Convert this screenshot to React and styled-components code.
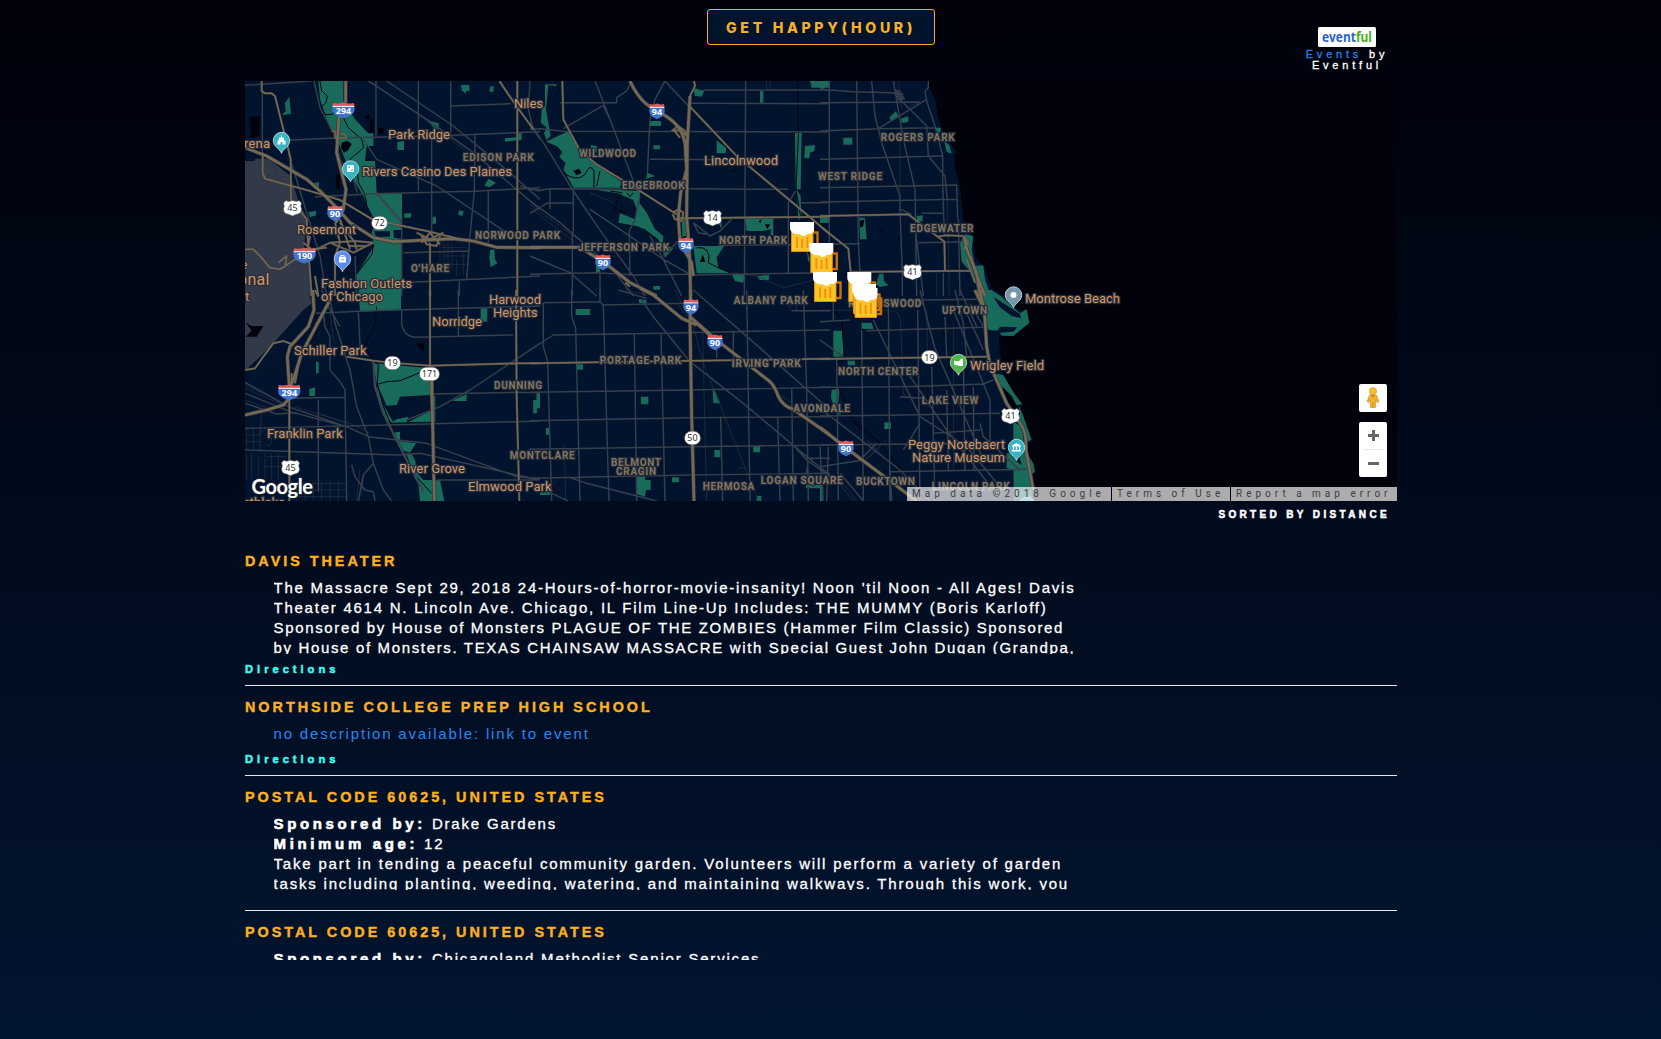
import React from 'react';
import styled, { createGlobalStyle } from 'styled-components';

const GlobalStyle = createGlobalStyle`
  * { box-sizing: border-box; }
  html, body { margin: 0; height: 100%; }
  body {
    font-family: "Liberation Sans", Helvetica, Arial, sans-serif;
    color: #fff;
    background: linear-gradient(#00010a, #021530) no-repeat;
    background-size: 100% 1039px;
    overflow: hidden;
  }
`;

const Page = styled.div`
  width: 1661px;
  height: 1039px;
  padding-right: 19px;
  display: flex;
  flex-direction: column;
  align-items: center;
`;

const Header = styled.header`
  width: 1152px;
  height: 81px;
  display: grid;
  grid-template-columns: 100px 1fr 100px;
  align-items: start;
`;

const HappyButton = styled.button`
  grid-column: 2;
  justify-self: center;
  margin-top: 9px;
  width: 228px;
  height: 36px;
  padding: 1px 0 0;
  border: 1px solid #fdb01f;
  border-radius: 3px;
  background: #02132d;
  color: #fdb01f;
  font: 800 14.2px/34px Inter, sans-serif;
  letter-spacing: 3.65px;
  white-space: nowrap;
`;

const Credit = styled.div`
  margin-top: 27px;
  display: flex;
  flex-direction: column;
  align-items: center;
  font-size: 11px;
  line-height: 11px;
  letter-spacing: 3.8px;
  text-align: center;
  -webkit-text-stroke: 0.3px;
`;

const CreditText = styled.div`
  padding-top: 2px;
  white-space: nowrap;
`;

const CreditLink = styled.a`
  color: #1f83ee;
`;

const MapFrame = styled.section`
  position: relative;
  width: 1152px;
  height: 420px;
  flex: none;
  overflow: hidden;
  background: #02132d;
`;

const MapDrawing = styled.svg`
  display: block;
`;

const Town = styled.text`
  font: 400 ${p => p.$size || 13}px Roboto, sans-serif;
  fill: #d39563;
  stroke: #242f3e;
  stroke-width: 2.6px;
  stroke-linejoin: round;
  paint-order: stroke;
`;

const Hood = styled.text`
  font: 700 10px Roboto, sans-serif;
  fill: #827460;
  stroke: #1f2938;
  stroke-width: 2.4px;
  stroke-linejoin: round;
  paint-order: stroke;
`;

const ShieldText = styled.text`
  font: ${p => (p.$bold ? 700 : 400)} 9px "Noto Sans", sans-serif;
  fill: ${p => (p.$bold ? '#fff' : '#333')};
  text-anchor: middle;
`;

const GoogleText = styled.text`
  font: 700 20px Lato, sans-serif;
  fill: #fff;
  stroke: #26303f;
  stroke-width: 1.4px;
  paint-order: stroke;
`;

const MapControls = styled.div`
  position: absolute;
  right: 10px;
  bottom: 24px;
  display: flex;
  flex-direction: column;
  gap: 10px;
`;

const ControlBox = styled.div`
  width: 28px;
  height: ${p => p.$height}px;
  border-radius: 2px;
  background: #fff;
  display: flex;
  flex-direction: column;
  align-items: center;
  justify-content: center;
`;

const ZoomButton = styled.button`
  width: 28px;
  height: 27px;
  padding: 0;
  border: 0;
  background: none;
  display: flex;
  align-items: center;
  justify-content: center;
`;

const ZoomRule = styled.div`
  width: 19px;
  height: 1px;
  background: #e6e6e6;
`;

const Attribution = styled.div`
  position: absolute;
  right: 0;
  bottom: 0;
  height: 14px;
  display: flex;
  gap: 1px;
`;

const AttributionItem = styled.span`
  width: ${p => p.$width}px;
  padding-left: 5px;
  background: rgba(245, 245, 245, 0.7);
  color: #3c3c3c;
  font: 400 10px/14px Roboto, sans-serif;
  letter-spacing: 4px;
  white-space: nowrap;
`;

const SortNote = styled.div`
  width: 1152px;
  height: 39px;
  padding: 7px 7px 0 0;
  font-size: 10px;
  font-weight: 700;
  line-height: 13px;
  letter-spacing: 3.35px;
  text-align: right;
  -webkit-text-stroke: 0.5px;
`;

const List = styled.main`
  width: 1152px;
  height: 420px;
  overflow: hidden;
`;

const Item = styled.article`
  padding: 11px 0 ${p => (p.$bare ? 20 : 8)}px;
  border-bottom: 1px solid #e8e8e8;
`;

const Title = styled.h2`
  margin: 0 0 7px;
  color: #fdb01f;
  font-size: 14.4px;
  font-weight: 700;
  line-height: 20px;
  letter-spacing: 2.97px;
  -webkit-text-stroke: 0.4px;
`;

const Description = styled.div`
  margin-left: 28.5px;
  max-height: 76px;
  overflow: hidden;
  font-size: 15px;
  line-height: 20px;
  letter-spacing: 1.8px;
`;

const Line = styled.div`
  height: 20px;
  letter-spacing: ${p => p.$spacing || 1.8}px;
  white-space: nowrap;
  -webkit-text-stroke: 0.3px;
`;

const Strong = styled.strong`
  letter-spacing: 3.65px;
  -webkit-text-stroke: 0.6px;
`;

const EventLink = styled.a`
  color: #2389f2;
  -webkit-text-stroke: 0;
`;

const Directions = styled.a`
  display: block;
  margin-top: 7px;
  color: #3cfdf0;
  font-size: 11.2px;
  font-weight: 700;
  line-height: 16px;
  letter-spacing: 3.97px;
  -webkit-text-stroke: 0.5px;
`;

/* Each tile is drawn in its own units, three to a screen pixel. */
const tiles = [
  {
    x: 240, y: 76,
    airport: 'M15 255H45V248H85L152 300 175 375 200 425 192 520 205 560 215 660H15Z',
    parks: 'M235 15H310V75L345 130 385 172H400V210H380L375 255H405L410 352H486V660H365L347 600 402 510 395 470 408 437 388 402 370 360 340 310 315 250 287 180 270 158 240 70ZM663 27H688V45H678V53L665 43ZM750 32 761 30V47H748ZM135 82 148 62 153 113 125 118 137 105ZM560 132 596 142 597 162 582 156ZM472 198 492 195V222H472ZM795 187 832 183V170H845V192L795 197ZM745 308 768 320 750 333 733 330ZM493 412H513V425H493ZM578 422H588V443H576ZM657 403 671 406 667 420 655 417ZM750 523 763 520 765 550 772 562 752 574 748 545ZM205 408 228 405V418L210 424ZM218 322 237 318V340L225 332Z',
    land: 'M402 466H450V482H408ZM460 462H484V488L462 485Z',
    water: 'M30 123 60 121 58 180 32 187ZM305 200 322 194 335 204 325 222 312 230 303 215ZM375 120 388 115V130H375ZM390 130H400V170H387ZM415 155H430V174H415ZM288 296 300 292V340H288Z',
    river: 'M240 15 245 45 262 60 258 80 243 95 256 116 275 115 290 105M310 125 325 155 365 190 371 215 330 250 352 280 355 320 372 350 380 380 370 400M400 505 396 535 345 600',
    minor: 'M15 28 215 15M67 50V250M140 193 285 186 440 183 640 178 900 167M222 15 240 95 285 180 300 250 340 310 352 350M408 15V180M385 15 560 130 700 230 900 400M440 15 640 150 780 265 900 370M535 15V345M632 15V170M632 90 812 83M575 190V490M705 175 703 345 690 480 680 610M745 345V500M225 362 400 353 700 346 900 335M490 530 685 525M480 620 900 600M370 190 410 250 590 330 740 430 830 490M485 430V660M870 15 865 100 880 160 900 190M840 330 900 345M658 610V660M145 230 200 410 240 540 260 660M345 540 350 660',
    thick: 'M408 350 485 437',
    fine: 'M390 15 575 145 690 235M600 500V560M612 500V570M624 500V575M636 505V580M605 515H680M610 540H685M610 565H680M650 550V600M670 530V600M80 275H108V300H80',
    major: 'M65 15V45L75 52H95L105 60 140 200 152 250 153 370 200 430 205 520 215 660M68 230V290L75 308 210 345 300 372 400 432 450 442 560 465 650 487M832 15V660M778 15 822 80 880 160M570 500V660M15 520H40L60 540 90 575 120 580 165 550 230 520 270 500 345 495 400 500M285 440 300 500 285 540V660M270 500 340 530 400 500M300 440 345 500 350 520M545 480 560 505 590 510 600 480M530 470 570 490 610 470M545 500 570 470 600 505M190 500 215 520 260 515M115 560 140 540 135 575M300 430 330 520M210 480 195 560M325 510H380M225 600 235 660M275 165H285V185H320L315 175 300 172',
    wide: 'M317 15V80M297 120 290 230 318 340 310 400 287 440M15 215 80 240 200 310 240 345 285 390 330 440 400 485 460 497 640 488 700 495 770 514 900 515',
  },
  {
    x: 240, y: 290,
    airport: 'M15 0H205L215 40 190 60 100 160 60 200 15 242Z',
    parks: 'M355 0H483V60L360 65ZM400 220 540 232 570 235V315L480 320 470 345 440 347 410 280ZM455 398 470 388 505 380 500 397ZM505 396 540 378 580 360 587 395ZM410 285 430 345 462 400 440 390 415 320ZM635 333 680 312V333ZM722 55H742V95H722ZM580 318H586V393H580ZM455 428 480 425V450H465ZM475 453 528 460 510 488 490 482ZM498 490 515 492 527 515 528 545 550 570H600L613 633H540L535 580ZM228 215H236V250H228ZM208 297 225 292V318H208ZM880 330H890V310H900V355H890V370H880Z',
    land: '',
    water: 'M18 98 35 108H70L50 140H18L35 122ZM528 160H552V185L540 175ZM450 360 458 380 448 370Z',
    river: 'M410 50 405 100 375 165 388 195 415 225 412 280 430 350 460 420 470 450 520 550 575 610M412 283 440 275 480 272 540 248',
    minor: 'M228 70 390 62 830 50 900 48M250 70 255 110 270 140V240L300 275 315 300 320 633M355 65 360 165 385 200M485 60V100Q490 140 530 142L820 135M655 0V140M900 160 780 240 690 300 600 350 500 390M580 312 830 307 900 308M140 325 315 322M15 415 450 405 830 395 900 393M270 30 285 100 330 240 350 350 385 440 400 520 430 600 455 633M15 277 150 352 320 410 385 440 560 460 830 560 900 566M15 310 150 365 300 405M15 340 110 372 170 368M15 480 310 490 470 495 540 490 900 570M235 330V605M590 570H900M400 520 370 555 355 633M335 525 345 560 375 600 400 605 405 633M245 0 260 40 300 110',
    thick: 'M400 215 405 290 430 370 470 450 510 530 550 605',
    fine: 'M15 285 140 345M15 295 130 345M15 330 100 360M160 350 330 400 390 430M235 370 320 400M65 370 60 430Q90 400 95 450 90 480 75 460M20 415V480M40 415V480M60 415V480M15 435H65M15 455H65M20 490V570M35 490V570M55 500V580M75 490V570M95 490V570M115 490V570M80 500H140M70 530H140M150 580H320M160 600H320M165 620H320M170 575V633M195 575V633M220 575V633M245 575V633M270 575V633M295 575V633M270 60 280 150 290 160M360 540 350 633M370 560 365 620',
    major: 'M148 320V633M15 240 45 235 70 200 100 160 130 153 155 162M320 200 400 212 450 218 570 227 830 220H900M570 0V230L578 420 583 633M828 0 830 320 838 633M155 250V300M180 200 165 280M225 0 235 20',
    wide: 'M218 0 222 60 205 110 150 170 142 200 148 290M270 30 185 190 160 270 150 290M148 325 130 345 80 360 15 375M575 230 578 400 583 633',
  },
  {
    x: 530, y: 76,
    parks: 'M45 25H82L78 30 55 28 48 100 55 140 62 180 50 192 42 172 50 155 33 140 35 100 45 90ZM48 197 115 165 130 180 150 215 165 242 275 318 270 335H130L100 280 107 262 88 242 97 228 80 210ZM180 338 330 345 328 380 350 410 375 460 400 480 398 500 430 518 405 545 385 490 345 460 320 450 265 440 270 412 315 430 320 400 310 372 262 352ZM455 430H468V480H457ZM490 510H582L560 545 565 575 600 592H500ZM645 428H730V478H722V460L700 465 650 465ZM605 595 645 597 640 620 615 615ZM680 600 718 597 716 612H690ZM370 630H390V641H370ZM198 560H210V590H198ZM183 207 200 210V230L183 215ZM370 208H390V220H370ZM360 135H393V150H360ZM352 290 375 300 348 308ZM560 193 588 215V232H560ZM690 45H700V80H690ZM490 35 523 45 515 62 495 60ZM840 15H900V35H845ZM795 170H815L812 340H797ZM825 210 855 207 853 225 840 230 838 247H823ZM800 340 812 360 815 430H805ZM870 425H900V440H870ZM830 520 840 550 835 560ZM565 425H575V460L565 440Z',
    land: '',
    water: 'M130 285 147 278 155 290 140 298ZM518 535 526 558H510ZM608 282 620 278 615 290ZM685 436 695 430 692 440ZM705 445 720 445 712 460Z',
    river: 'M100 290Q140 320 165 295 180 260 192 285V335M210 285 200 330M240 345 275 350 260 375 255 400 290 410M500 515Q545 510 535 560 560 575 600 590M80 20 90 45M803 15 805 180 798 340 815 440M290 350 300 362 310 350',
    minor: 'M647 15 643 660M405 15 375 70 360 130 352 290M195 15 240 130 312 320M0 140 40 200 130 345 215 470 310 600 345 660M405 15 480 95M90 80H260V65L290 45 303 20M100 158 220 88M0 160 30 158 100 166 900 168M480 82 900 83M360 250 700 252M480 338 775 340M0 340 30 343 60 338 480 340M130 340V470M0 412 50 382 128 380M0 595 200 590 320 597 490 595M520 42H900M127 470V660M210 590V660M330 360 315 430 298 465 300 600M180 400 270 460 400 550 490 600M360 480 400 550 455 660M490 440 540 480 570 465 605 430M490 440 505 470 530 475M495 597 900 590M565 508 900 505M400 540 460 480M0 375 90 440 240 570 310 660M810 380H900M775 590V380L797 345M0 540 120 590 200 660M240 130 220 88M60 400 60 340',
    thick: '',
    fine: 'M0 385 130 480 280 600M0 395 150 510M710 15V40H720V15M180 350 250 380M430 500 440 520M600 590 680 600 760 635 900 600',
    major: 'M97 15 100 130 150 225 200 265 330 345 440 415M480 92 620 240 830 415 900 475M440 427 900 422M425 165 445 150 465 165 475 185M430 160 450 185M440 150 470 180M428 410 445 400 460 410 455 435 435 430 428 415M285 620 300 632M430 165 460 160M492 15 495 30 480 60',
    wide: 'M300 15Q320 60 350 85L410 122Q455 150 465 200L470 280 452 350 445 420 450 500 485 560 490 600M480 60 472 200 470 420 478 520 482 660M0 514H150M150 514 230 565 300 620 380 660',
  },
  {
    x: 530, y: 290,
    parks: 'M137 57H180V75H137ZM327 27 349 30V42L327 38ZM141 223H159V239H141ZM333 320H355V343H333ZM548 300 555 302 569 335V340H550ZM48 414H57V434H48ZM553 480H571V502H553ZM670 468H690V487H670ZM320 560H345V570H362V600H348L345 620 320 612ZM426 562H447V577H426ZM680 618H694V633H680ZM828 585H878V595H828ZM20 310H30V345H20V370H10V335H20ZM30 608 60 606V615H30ZM832 515 835 550H828Z',
    land: '', water: '', river: '',
    minor: 'M40 38V170L53 215 65 633M125 0V80L137 115 150 633M210 0V35L220 45 230 400 237 633M313 130 320 633M393 130 405 633M560 165V205M610 125V205M650 0 660 633M572 380 578 633M743 380 750 633M785 295 790 633M820 0 830 300 835 633M870 470 878 633M40 38 210 35M215 45 480 40M0 180 70 135 400 130 600 125 900 120M0 307 480 300 900 292M0 392 480 383 900 380M0 478 480 470 900 465M0 565 480 555 900 550M265 0 350 25M335 30 370 80 480 215 640 340 830 500 900 555M490 0 640 130 810 280 900 360M120 563 170 580 300 613 380 633M60 608 115 633M785 62H900M830 505H900M785 460 830 510 900 560',
    thick: '',
    fine: 'M435 0 490 110 520 220 650 545 688 633M518 130 530 633M103 465 107 633M620 540Q635 525 650 540M440 40 470 80M780 40V60H800V40M740 310 790 340M830 500 850 510 840 520M285 0 350 15',
    major: 'M0 220 450 213 900 206',
    wide: 'M330 -5 370 15 455 85 500 105M482 0 480 100 485 380 492 633M480 80 560 150 720 275Q735 290 745 320 760 350 790 358L900 435M490 90 555 150',
  },
  {
    x: 820, y: 76,
    parks: 'M0 15H28L12 38H0ZM208 125 228 105 235 120 215 137ZM243 128 265 120V137L245 142ZM70 185H97V206H70ZM347 155H363L360 172 350 165ZM373 195 388 208 395 233 380 228ZM118 425H135L140 490H120ZM0 425H28V440H0ZM290 420 308 418V436H292ZM435 475 460 480 455 520 465 570 490 568 495 610 512 660H480L455 590 425 558 420 500ZM178 593H190L192 615 205 628 180 633 168 625Z',
    land: '',
    patch: 'M225 42 240 42 256 70 235 74Z',
    water: 'M120 435 133 430 130 450 120 455ZM178 468 192 462 180 472ZM232 488 240 484 238 496Z',
    river: '',
    minor: 'M28 15V500M110 15 115 500 120 590M155 15 165 120 185 200 240 360V400L247 590M220 15 250 190 285 340 290 660M325 15V35L315 45 320 75 345 150 368 240V320L373 480M0 40 100 47 210 50 250 55M0 80 300 78M0 165 180 158 345 155M175 158 320 70M0 250 365 240M0 335 410 327 413 430M0 378 410 370M225 55 260 90 320 150 325 240 375 300 382 370M243 400 275 415M295 500 425 497M285 455 305 620 310 660M415 430 420 660M0 505 120 503M305 412H370M120 590 122 640M247 590V660M370 590V660',
    thick: '',
    fine: 'M240 160V370M235 15 245 100M382 370 388 660M300 78 270 90M350 590V660',
    major: 'M0 420 265 415 350 480 373 497 375 583M350 482 380 478 430 480M0 450 85 518 92 588 450 584M92 590 100 600M430 480 445 500 430 520M440 550 465 620',
    wide: 'M432 480 440 520 470 590 480 660M450 540 475 610 495 660',
  },
  {
    x: 820, y: 290,
    parks: 'M460 0H515L545 20 600 70 620 58 628 98 580 138 545 137 540 128 580 125 592 112 540 110 533 122 505 120 485 60ZM520 250 550 255 582 310 607 342 590 345 570 320 545 300ZM597 350 607 370 628 430 635 450 620 455 597 400ZM580 395 605 410 615 480 640 520 645 545 630 555 640 633H582L580 540 560 535V490H600L580 450ZM40 122H68L72 200H40ZM83 212H105V226H83ZM193 397H213V417H193ZM125 98 155 98 161 118 125 116ZM35 300 58 295 55 340 62 375 50 370 33 325ZM0 590H10V633H0ZM300 30H310V48Z',
    land: 'M520 20 600 72 603 85 575 78 540 52ZM598 500 605 525 590 515Z',
    water: 'M548 290 575 318 592 350 575 360 550 330ZM583 345 600 370 592 390 580 365ZM370 120 376 135 370 132Z',
    river: 'M20 30 65 90 72 190 50 280 100 390 170 450 230 520 260 560 310 600M100 395 150 440 160 445M230 520 255 560',
    minor: 'M125 120 130 630M205 40 210 633M293 60 300 633M335 230 345 633M160 90 300 380 440 470 540 590M140 122 490 112M0 292 250 290 490 282 520 270M0 378 250 375 540 370M0 465 540 460M210 545 620 538M0 95 90 90M290 30 490 28M300 0 330 120 345 175 430 370 490 510M400 60 510 330V480M250 230 380 420 520 600M0 355 240 540 330 633M40 0V90M375 80 380 200M405 0 430 100 440 200M440 70 490 180M0 150 70 200M50 200 55 630M20 633 25 470M210 540 215 633M130 500 170 460M240 320 310 325M60 550 130 633M0 530 130 510M150 0 152 60M480 400 490 440 600 540M420 0 470 110M450 40 490 110M340 430 480 420M300 400 250 480M380 300 385 540M430 200 435 540M460 290 462 540',
    thick: '',
    fine: 'M0 60 220 62Q240 65 242 100L250 310Q255 325 300 325M55 560 110 633M45 565 100 633M130 515 180 470M400 100V540M140 450 190 500M140 505 200 450M320 60 322 180',
    major: 'M0 207 500 200',
    wide: 'M465 0 493 60 500 170 510 225 560 340 600 400Q620 420 618 480L640 600M0 412 80 475 180 550 290 633M480 0 492 60',
  },
];

const lake = 'M927 81 930 89 935 99 938 116 942 129 945 136 957 152 954 155 955 169 960 186 963 219 973 236 975 256 983 266 992 288 1004 296 1020 311 1026 309 1029 324 1013 336 1002 335 999 334 1000 352 1003 374 1010 387 1018 398 1022 404 1021 412 1029 433 1031 441 1027 445 1029 456 1034 465 1035 474 1031 478 1035 501H1397V81Z';

const towns = [
  ['Niles', 514, 29, 108.7], ['Park Ridge', 388, 62, 140], ['Rivers Casino Des Plaines', 362, 150, 176.7],
  ['Rosemont', 297, 59, 234.7], ['Fashion Outlets', 321, 91, 288.7], ['of Chicago', 321, 62, 301.7],
  ['rena', 244, 26, 148.3], ['e', 240.5, 7.5, 269.3], ['onal', 238, 31.5, 285.7, 16], ['t', 245, 4.5, 301.3],
  ['Harwood', 489, 52, 304.3], ['Heights', 493, 44.5, 317.5], ['Norridge', 432, 50, 326.5],
  ['Schiller Park', 294, 72.5, 355.5], ['Franklin Park', 267, 75.5, 438.7], ['River Grove', 399, 66, 473.7],
  ['Elmwood Park', 468, 83.5, 491.7], ['rthlake', 245, 40, 507.5], ['Lincolnwood', 704, 74, 165.7],
  ['Montrose Beach', 1025, 95, 303.5], ['Wrigley Field', 970, 74, 370.7],
  ['Peggy Notebaert', 908, 97, 450], ['Nature Museum', 912, 93, 463],
];

const hoods = [
  ['EDISON PARK', 462.7, 71, 160.3], ['NORWOOD PARK', 475, 85, 238.3], ["O'HARE", 411, 38, 271.3],
  ['DUNNING', 494, 48, 388.3], ['MONTCLARE', 509.7, 65, 458.3], ['WILDWOOD', 579, 57, 156.3],
  ['EDGEBROOK', 622, 62.5, 188.3], ['JEFFERSON PARK', 578, 91, 250.3], ['NORTH PARK', 719, 68, 243.3],
  ['ALBANY PARK', 733.7, 74, 303], ['PORTAGE PARK', 599.7, 81.5, 363.3], ['IRVING PARK', 731.7, 69, 366.3],
  ['AVONDALE', 793.3, 56.5, 411.3], ['BELMONT', 611, 50, 465.3], ['CRAGIN', 616, 40, 474.3],
  ['HERMOSA', 702.7, 51.5, 489.3], ['LOGAN SQUARE', 760.7, 82, 483.3], ['ROGERS PARK', 880.7, 74, 140.3],
  ['WEST RIDGE', 818, 64, 179.3], ['EDGEWATER', 910, 63.5, 231.3], ['RAVENSWOOD', 848.3, 73, 306.3],
  ['UPTOWN', 942, 45, 313.3], ['NORTH CENTER', 838, 80.5, 374.3], ['LAKE VIEW', 921.7, 56.5, 403.3],
  ['BUCKTOWN', 856, 58.7, 484.3], ['LINCOLN PARK', 931.7, 78, 489],
];

const interstates = [
  ['294', 343.5, 110], ['90', 335, 213], ['190', 304.5, 255.3], ['94', 657, 111], ['94', 686, 245],
  ['90', 603, 262], ['94', 691, 306.5], ['90', 715, 342], ['294', 289.3, 392], ['90', 846, 448],
];
const usRoutes = [['45', 292.5, 208], ['45', 290.5, 467.7], ['14', 712.5, 218], ['41', 912.5, 272], ['41', 1010.5, 416]];
const stateRoutes = [['72', 379.5, 223, 8], ['19', 392.5, 363, 8], ['171', 429.5, 374, 10], ['50', 692.5, 438, 8], ['19', 929.5, 357.3, 8]];

const Interstate = ({ label, x, y }) => {
  const w = label.length > 2 ? 11.5 : 8;
  return (
    <g transform={`translate(${x} ${y})`}>
      <path d={`M${-w + 1} -7Q${-w / 2} -6 0 -7.5 ${w / 2} -6 ${w - 1} -7L${w - 0.6} -4H${-w + 0.6}Z`} fill="#dc5b5b" />
      <path d={`M${-w + 0.6} -3.2H${w - 0.6}Q${w + 1.5} 5 0 8.2 ${-w - 1.5} 5 ${-w + 0.6} -3.2Z`} fill="#4273ca" />
      <path d={`M${-w + 0.6} -3.6H${w - 0.6}`} stroke="#fff" strokeWidth="1" />
      <ShieldText $bold y="4">{label}</ShieldText>
    </g>
  );
};

const UsRoute = ({ label, x, y }) => (
  <g transform={`translate(${x} ${y})`}>
    <path d="M-6.5 -7.5 -4 -6.5 0 -7.5 4 -6.5 6.5 -7.5 9 -5Q7.5 -2 9 1 9 6 4 6.3L0 8 -4 6.3Q-9 6 -9 1 -7.5 -2 -9 -5Z" fill="#fff" stroke="#555" strokeWidth=".6" />
    <ShieldText y="3.4">{label}</ShieldText>
  </g>
);

const StateRoute = ({ label, x, y, r }) => (
  <g transform={`translate(${x} ${y})`}>
    <rect x={-r} y="-6.7" width={r * 2} height="13.4" rx="6.7" fill="#fff" stroke="#555" strokeWidth=".6" />
    <ShieldText y="3.3">{label}</ShieldText>
  </g>
);

const Pin = ({ x, y, color, children }) => (
  <g transform={`translate(${x} ${y})`}>
    <path d="M0 12.8C-1 8.5-8.2 6.5-8.2 0A8.2 8.2 0 0 1 8.2 0C8.2 6.5 1 8.5 0 12.8Z" fill={color} stroke="#d3e3e8" strokeWidth=".8" />
    {children}
  </g>
);

const Beer = ({ x, y }) => (
  <g transform={`translate(${x} ${y})`}>
    <path d="M21 10.5H27.5V26H21" fill="none" stroke="#c96f0c" strokeWidth="2.4" />
    <path d="M1.5 8H23V29.5H1.5Z" fill="#fdc52c" stroke="#e88a10" strokeWidth="1" />
    <path d="M7 15V26M12.2 17V26M17.4 15V26" stroke="#f58c0c" strokeWidth="1.8" />
    <path d="M0 0H24V9Q22 13 18 11.5 14 16 9.5 12 4 13 1 9Q0 8 0 6Z" fill="#fff" />
  </g>
);

const layer = (key, props) => tiles.map(t => t[key] ? (
  <path key={`${t.x}-${t.y}`} transform={`translate(${t.x} ${t.y}) scale(.33333)`} d={t[key]} {...props} />
) : null);

const road = (color, width) => ({ fill: 'none', stroke: color, strokeWidth: width, strokeLinejoin: 'round' });

const ChicagoMap = () => (
  <MapDrawing width="1152" height="420" viewBox="245 81 1152 420">
    <path d={lake} fill="#01020b" />
    {layer('airport', { fill: '#323a49' })}
    {layer('parks', { fill: '#186a5b' })}
    {layer('land', { fill: '#02132d' })}
    {layer('patch', { fill: '#323a49' })}
    {layer('water', { fill: '#01020b' })}
    {layer('river', road('#01030d', 3))}
    {layer('fine', road('#2a3443', 2))}
    {layer('minor', road('#363f4c', 4.4))}
    {layer('thick', road('#3c4451', 7))}
    {layer('major', road('#3c3f42', 7))}
    {layer('wide', road('#33383e', 12))}
    {layer('major', road('#756955', 4.6))}
    {layer('wide', road('#756955', 8))}
    {hoods.map(([t, x, w, y]) => <Hood key={t} x={x} y={y + 0.6} textLength={w}>{t}</Hood>)}
    {towns.map(([t, x, w, y, s]) => <Town key={t} x={x} y={y - 0.7} textLength={w} $size={s}>{t}</Town>)}
    {interstates.map(([l, x, y]) => <Interstate key={`${x}`} label={l} x={x} y={y} />)}
    {usRoutes.map(([l, x, y]) => <UsRoute key={`${x}`} label={l} x={x} y={y} />)}
    {stateRoutes.map(([l, x, y, r]) => <StateRoute key={`${x}`} label={l} x={x} y={y} r={r} />)}
    <Pin x={281.5} y={140.5} color="#37b3c6">
      <path d="M-4 4V0H-2.5V-3H-.5V-5H.5V-3H2.5V0H4V4H1V1.5H-1V4Z" fill="#fff" />
    </Pin>
    <Pin x={350.5} y={169} color="#37b3c6">
      <rect x="-3.5" y="-4" width="7" height="7" rx="1" fill="#fff" />
      <path d="M-2-2.5h1.5v1.5h-1.5zM.8.2h1.5v1.5h-1.5z" fill="#37b3c6" />
    </Pin>
    <Pin x={342.5} y={259} color="#5a8ded">
      <path d="M-3.5-2H3.5V3.5H-3.5Z" fill="#fff" />
      <path d="M-1.8-1.5V-3.3H1.8V-1.5" fill="none" stroke="#fff" />
      <path d="M-1.5 0Q0 1.8 1.5 0" fill="none" stroke="#5a8ded" strokeWidth=".8" />
    </Pin>
    <Pin x={1013.5} y={295} color="#7697a9"><circle r="3" fill="#fff" /></Pin>
    <Pin x={958.5} y={362.5} color="#4db645">
      <path d="M-4.5-2-1-1 1.5-2 2-3.5 4.5-4V3.2Q0 4-4.5 2Z" fill="#fff" />
    </Pin>
    <Pin x={1016.5} y={447.5} color="#37b3c6">
      <path d="M0-4.5 4.5-2V-1H-4.5V-2ZM-4.5 2.5H4.5V4H-4.5ZM-3.7-.7h1.3v3h-1.3zM-.7-.7H.7v3H-.7zM2.4-.7h1.3v3H2.4z" fill="#fff" />
    </Pin>
    <Pin x={1027.3} y={505.5} color="#37b3c6" />
    <Beer x={790} y={222} />
    <Beer x={809.3} y={243} />
    <Beer x={813} y={272} />
    <Beer x={847.3} y={272} />
    <Beer x={852} y={284} />
    <Beer x={853.5} y={288} />
    <GoogleText x="251.5" y="494" textLength="61.5">Google</GoogleText>
  </MapDrawing>
);

const Pegman = () => (
  <svg width="14" height="22" viewBox="0 0 14 22">
    <circle cx="7" cy="4.2" r="3.6" fill="#f8bc2c" stroke="#b98b2a" strokeWidth=".5" />
    <path d="M3.5 8H10.5L13 14.5 11.3 15.5 10 12.5 9.6 20.5H4.4L4 12.5 2.7 15.5 1 14.5Z" fill="#f3b42d" stroke="#b07c30" strokeWidth=".5" />
    <path d="M4.5 8 7 11 9.5 8Z" fill="#de7c28" />
    <path d="M7 15V20.5" stroke="#c98b24" strokeWidth=".8" />
  </svg>
);

const LogoMark = () => (
  <svg width="58" height="20" viewBox="0 0 58 20">
    <rect width="58" height="20" rx="1.5" fill="#fff" />
    <text x="4" y="15.3" textLength="50" lengthAdjust="spacingAndGlyphs" fontFamily="Open Sans, sans-serif" fontWeight="700" fontSize="15" letterSpacing="0" fill="#2a63cb">
      event<tspan fill="#46b01a">ful</tspan>
    </text>
  </svg>
);

const events = [
  {
    title: 'DAVIS THEATER',
    directions: true,
    lines: [
      ["The Massacre Sept 29, 2018 24-Hours-of-horror-movie-insanity! Noon 'til Noon - All Ages! Davis", 1.76],
      ['Theater 4614 N. Lincoln Ave. Chicago, IL Film Line-Up Includes: THE MUMMY (Boris Karloff)', 1.755],
      ['Sponsored by House of Monsters PLAGUE OF THE ZOMBIES (Hammer Film Classic) Sponsored', 1.655],
      ['by House of Monsters. TEXAS CHAINSAW MASSACRE with Special Guest John Dugan (Grandpa,', 1.655],
    ],
  },
  {
    title: 'NORTHSIDE COLLEGE PREP HIGH SCHOOL',
    directions: true,
    link: 'no description available: link to event',
    lines: [],
  },
  {
    title: 'POSTAL CODE 60625, UNITED STATES',
    fields: [['Sponsored by:', 'Drake Gardens'], ['Minimum age:', '12']],
    lines: [
      ['Take part in tending a peaceful community garden. Volunteers will perform a variety of garden', 1.81],
      ['tasks including planting, weeding, watering, and maintaining walkways. Through this work, you', 1.815],
    ],
  },
  {
    title: 'POSTAL CODE 60625, UNITED STATES',
    fields: [['Sponsored by:', 'Chicagoland Methodist Senior Services']],
    lines: [],
  },
];

export default function App() {
  return (
    <>
      <GlobalStyle />
      <Page>
        <Header>
          <HappyButton>GET HAPPY(HOUR)</HappyButton>
          <Credit>
            <LogoMark />
            <CreditText>
              <CreditLink>Events</CreditLink> by<br />Eventful
            </CreditText>
          </Credit>
        </Header>
        <MapFrame>
          <ChicagoMap />
          <MapControls>
            <ControlBox $height={28}><Pegman /></ControlBox>
            <ControlBox $height={55}>
              <ZoomButton aria-label="Zoom in">
                <svg width="11" height="11"><path d="M5.5 0V11M0 5.5H11" stroke="#666" strokeWidth="3" /></svg>
              </ZoomButton>
              <ZoomRule />
              <ZoomButton aria-label="Zoom out">
                <svg width="11" height="11"><path d="M0 5.5H11" stroke="#666" strokeWidth="3" /></svg>
              </ZoomButton>
            </ControlBox>
          </MapControls>
          <Attribution>
            <AttributionItem $width={204}>Map data ©2018 Google</AttributionItem>
            <AttributionItem $width={118}>Terms of Use</AttributionItem>
            <AttributionItem $width={166}>Report a map error</AttributionItem>
          </Attribution>
        </MapFrame>
        <SortNote>SORTED BY DISTANCE</SortNote>
        <List>
          {events.map((e, i) => (
            <Item key={i} $bare={!e.directions}>
              <Title>{e.title}</Title>
              <Description>
                {e.link && <Line $spacing={1.82}><EventLink>{e.link}</EventLink></Line>}
                {(e.fields || []).map(([k, v]) => <Line key={k}><Strong>{k}</Strong> {v}</Line>)}
                {e.lines.map(([text, spacing]) => <Line key={text} $spacing={spacing}>{text}</Line>)}
              </Description>
              {e.directions && <Directions>Directions</Directions>}
            </Item>
          ))}
        </List>
      </Page>
    </>
  );
}
